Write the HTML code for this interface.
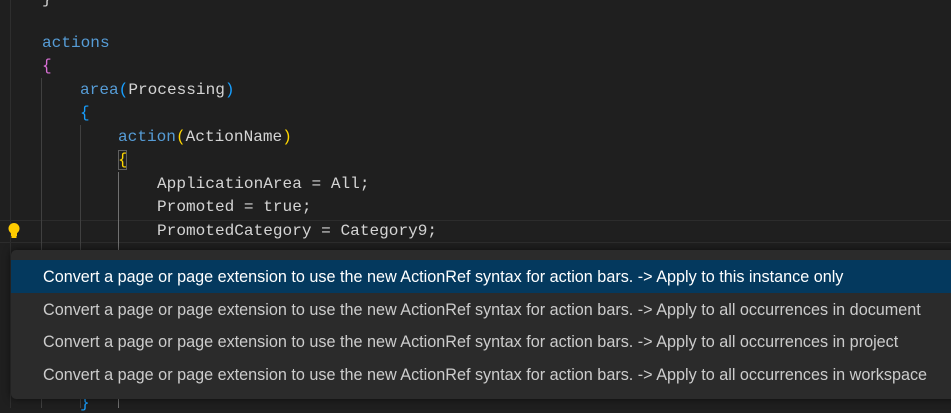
<!DOCTYPE html>
<html><head><style>
body{margin:0;width:951px;height:408px;background:#1f1f1f;overflow:hidden;position:relative;font-family:"Liberation Mono",monospace;}
.l{position:absolute;font-size:16.1px;white-space:pre;color:#d4d4d4;line-height:20px}
.g{position:absolute;width:1px;background:#404040}
.kw{color:#569cd6}.p1{color:#da70d6}.p2{color:#179fff}.p3{color:#ffd700}
#menu{position:absolute;left:11px;top:250px;width:960px;height:149px;background:#2b2b2b;border-radius:5px;box-shadow:0 0 8px rgba(0,0,0,.6)}
.r{position:absolute;left:0;width:960px;height:33px;line-height:35px;font-family:"Liberation Sans",sans-serif;font-size:16.2px;color:#cccccc;padding-left:32px;box-sizing:border-box;white-space:nowrap}
.sel{background:#04395e;color:#fff}
</style></head><body>
<div class="g" style="left:10px;top:0;height:408px;background:#2e2e2e"></div>
<div style="position:absolute;left:0;top:220px;width:951px;height:21px;border-top:1px solid #2c2c2c;border-bottom:1px solid #2c2c2c"></div>
<div class="g" style="left:41px;top:78px;height:330px"></div>
<div class="g" style="left:80px;top:125px;height:283px"></div>
<div class="g" style="left:118px;top:172px;height:236px;background:#707070"></div>
<div class="l" style="left:42px;top:-11px">}</div>
<div class="l kw" style="left:42px;top:33px">actions</div>
<div class="l p1" style="left:42px;top:56px">{</div>
<div class="l" style="left:80px;top:80px"><span class="kw">area</span><span class="p2">(</span>Processing<span class="p2">)</span></div>
<div class="l p2" style="left:80px;top:103px">{</div>
<div class="l" style="left:118px;top:127px"><span class="kw">action</span><span class="p3">(</span>ActionName<span class="p3">)</span></div>
<div class="l p3" style="left:118px;top:150px;outline:1px solid #606060;outline-offset:-1px;width:9px">{</div>
<div class="l" style="left:157px;top:174px">ApplicationArea = All;</div>
<div class="l" style="left:157px;top:197px">Promoted = true;</div>
<div class="l" style="left:157px;top:221px">PromotedCategory = Category9;</div>
<svg style="position:absolute;left:7px;top:222px" width="14" height="18" viewBox="0 0 14 18"><circle cx="7" cy="6.5" r="5.5" fill="#ffcc00"/><rect x="4" y="9" width="6" height="5" fill="#ffcc00"/><rect x="4.5" y="14" width="5" height="2" fill="#ffcc00"/></svg>
<div class="l p2" style="left:80px;top:393px">}</div>
<div id="menu">
<div class="r sel" style="top:10px">Convert a page or page extension to use the new ActionRef syntax for action bars. -&gt; Apply to this instance only</div>
<div class="r" style="top:43px">Convert a page or page extension to use the new ActionRef syntax for action bars. -&gt; Apply to all occurrences in document</div>
<div class="r" style="top:75px">Convert a page or page extension to use the new ActionRef syntax for action bars. -&gt; Apply to all occurrences in project</div>
<div class="r" style="top:108px">Convert a page or page extension to use the new ActionRef syntax for action bars. -&gt; Apply to all occurrences in workspace</div>
</div>
</body></html>
